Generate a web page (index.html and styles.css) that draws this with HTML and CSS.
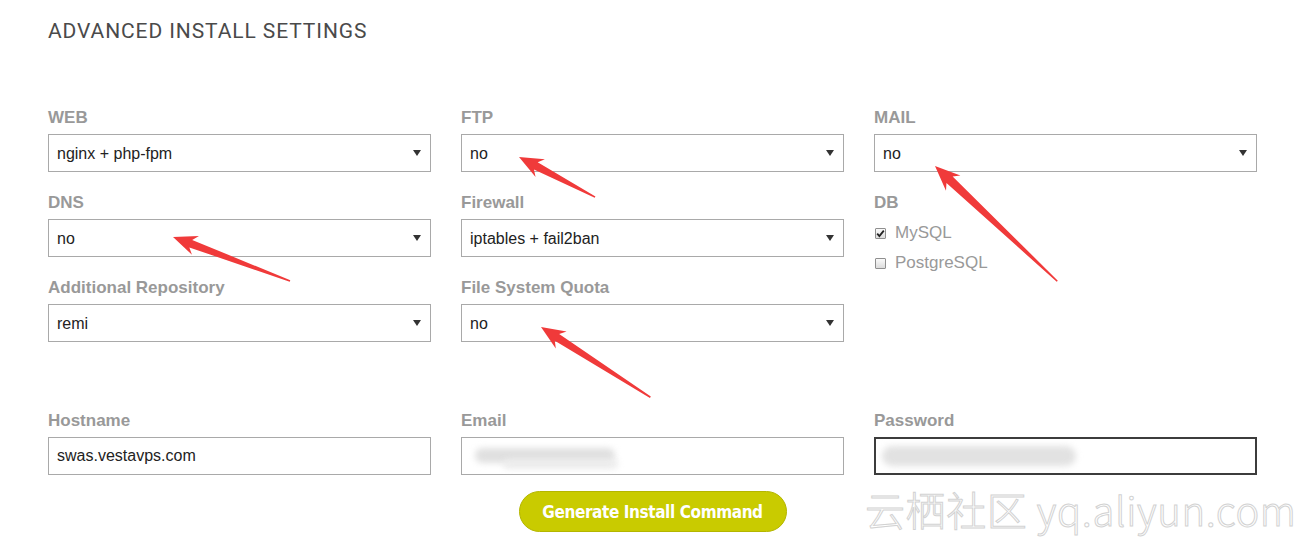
FILE: index.html
```html
<!DOCTYPE html>
<html lang="en">
<head>
  <meta charset="UTF-8" />
  <meta name="viewport" content="width=device-width, initial-scale=1" />
  <title>Advanced Install Settings</title>
  <link rel="stylesheet" href="styles.css">
</head>
<body>
  <div class="page">
    <h2 class="title">ADVANCED INSTALL SETTINGS</h2>

    <div class="fields">
      <div class="field">
        <label class="label">WEB</label>
        <div class="select"><select><option>nginx + php-fpm</option></select></div>
      </div>
      <div class="field">
        <label class="label">FTP</label>
        <div class="select"><select><option>no</option></select></div>
      </div>
      <div class="field">
        <label class="label">MAIL</label>
        <div class="select"><select><option>no</option></select></div>
      </div>

      <div class="field">
        <label class="label">DNS</label>
        <div class="select"><select><option>no</option></select></div>
      </div>
      <div class="field">
        <label class="label">Firewall</label>
        <div class="select"><select><option>iptables + fail2ban</option></select></div>
      </div>
      <div class="field db">
        <label class="label">DB</label>
        <div class="check"><span class="box checked"><svg width="9" height="9" viewBox="0 0 9 9"><path d="M1.2 4.6 L3.4 7 L7.8 1.6" fill="none" stroke="#222" stroke-width="1.8"/></svg></span>MySQL</div>
        <div class="check"><span class="box"></span>PostgreSQL</div>
      </div>

      <div class="field">
        <label class="label">Additional Repository</label>
        <div class="select"><select><option>remi</option></select></div>
      </div>
      <div class="field">
        <label class="label">File System Quota</label>
        <div class="select"><select><option>no</option></select></div>
      </div>
    </div>

    <div class="fields account">
      <div class="field">
        <label class="label">Hostname</label>
        <input class="text" value="swas.vestavps.com" />
      </div>
      <div class="field">
        <label class="label">Email</label>
        <div class="masked">
          <input class="text" value="" />
          <span class="blur blur-email"></span>
          <span class="blur blur-email2"></span>
        </div>
      </div>
      <div class="field">
        <label class="label">Password</label>
        <div class="masked">
          <input class="text focused" value="" />
          <span class="blur blur-pass"></span>
        </div>
      </div>
    </div>

    <div class="actions">
      <button class="generate">Generate Install Command</button>
    </div>
  </div>

  <!-- annotation arrows drawn over the screenshot -->
  <svg class="arrows" width="1305" height="541" viewBox="0 0 1305 541">
    <g fill="#f03a3a">
      <polygon transform="translate(519 157) rotate(27.8)" points="0,0 24,-10 19,-4 86,-0.8 86,0.8 19,4 24,10" />
      <polygon transform="translate(935 166) rotate(43.3)" points="0,0 25,-10.5 20,-4.5 168,-0.8 168,0.8 20,4.5 25,10.5" />
      <polygon transform="translate(173 237) rotate(20.6)" points="0,0 24,-10 19,-4 125,-0.8 125,0.8 19,4 24,10" />
      <polygon transform="translate(541 327) rotate(32.7)" points="0,0 24,-10 19,-4 130,-0.8 130,0.8 19,4 24,10" />
    </g>
  </svg>

  <div class="watermark">云栖社区 yq.aliyun.com</div>
</body>
</html>
```

FILE: styles.css
```css
body { margin: 0; background: #fff; font-family: "Liberation Sans", Arial, sans-serif; color: #333; }
.page { padding: 18px 0 0 48px; width: 1209px; }
.title { margin: 0; font-family: Roboto, sans-serif; font-weight: 400; font-size: 21px; line-height: 26px; color: #4a4a4a; letter-spacing: 0.9px; }

.fields { display: grid; grid-template-columns: repeat(3, 383px); column-gap: 30px; row-gap: 21px; margin-top: 64px; }
.fields.account { margin-top: 69px; }
.field { display: flex; flex-direction: column; }
.field.db { grid-row: span 2; }
.label { font-size: 17px; font-weight: bold; line-height: 20px; color: #999; margin-bottom: 6px; }

.select { position: relative; }
.select select { appearance: none; -webkit-appearance: none; width: 100%; height: 38px; margin: 0; padding: 0 0 0 8px; border: 1px solid #a9a9a9; border-radius: 0; background: #fff; font-family: "Liberation Sans", Arial, sans-serif; font-size: 16px; color: #222; }
.select::after { content: ""; position: absolute; right: 10px; top: 16px; border-left: 4px solid transparent; border-right: 4px solid transparent; border-top: 6px solid #333; pointer-events: none; }

.check { display: flex; align-items: center; height: 30px; font-size: 17px; color: #999; margin-top: -1px; }
.check + .check { margin-top: 0; }
.box { width: 11px; height: 11px; box-sizing: border-box; border: 1px solid #8f8f8f; border-radius: 1px; background: linear-gradient(#fafafa, #dcdcdc); margin: 0 9px 0 1px; display: flex; align-items: center; justify-content: center; }

.text { box-sizing: border-box; width: 100%; height: 38px; margin: 0; padding: 0 0 0 8px; border: 1px solid #a9a9a9; font-family: "Liberation Sans", Arial, sans-serif; font-size: 16px; color: #222; outline: none; }
.text.focused { border: 2px solid #3c3c3c; }
.masked { position: relative; }
.blur { position: absolute; background: #dedede; filter: blur(3px); border-radius: 10px; }
.blur-email { left: 14px; top: 11px; width: 140px; height: 15px; background: #e0e0e0; }
.blur-email2 { left: 42px; top: 22px; width: 115px; height: 10px; background: #ececec; }
.blur-pass { left: 8px; top: 9px; width: 194px; height: 20px; background: #e2e2e2; }

.actions { display: flex; justify-content: center; margin-top: 16px; }
.generate { width: 268px; height: 41px; border-radius: 21px; border: 1px solid #b4b600; background: #c9cb00; color: #fff; font-family: "DejaVu Sans Condensed", "DejaVu Sans", sans-serif; font-weight: bold; font-size: 17px; letter-spacing: -0.4px; cursor: pointer; }

.arrows { position: absolute; left: 0; top: 0; pointer-events: none; }
.watermark { position: absolute; left: 865px; top: 484px; font-family: "Noto Sans CJK SC", "DejaVu Sans", sans-serif; font-weight: 300; font-size: 40px; line-height: 50px; color: #fff; -webkit-text-stroke: 1px #d2d2d2; letter-spacing: 0.6px; white-space: nowrap; pointer-events: none; }
```
